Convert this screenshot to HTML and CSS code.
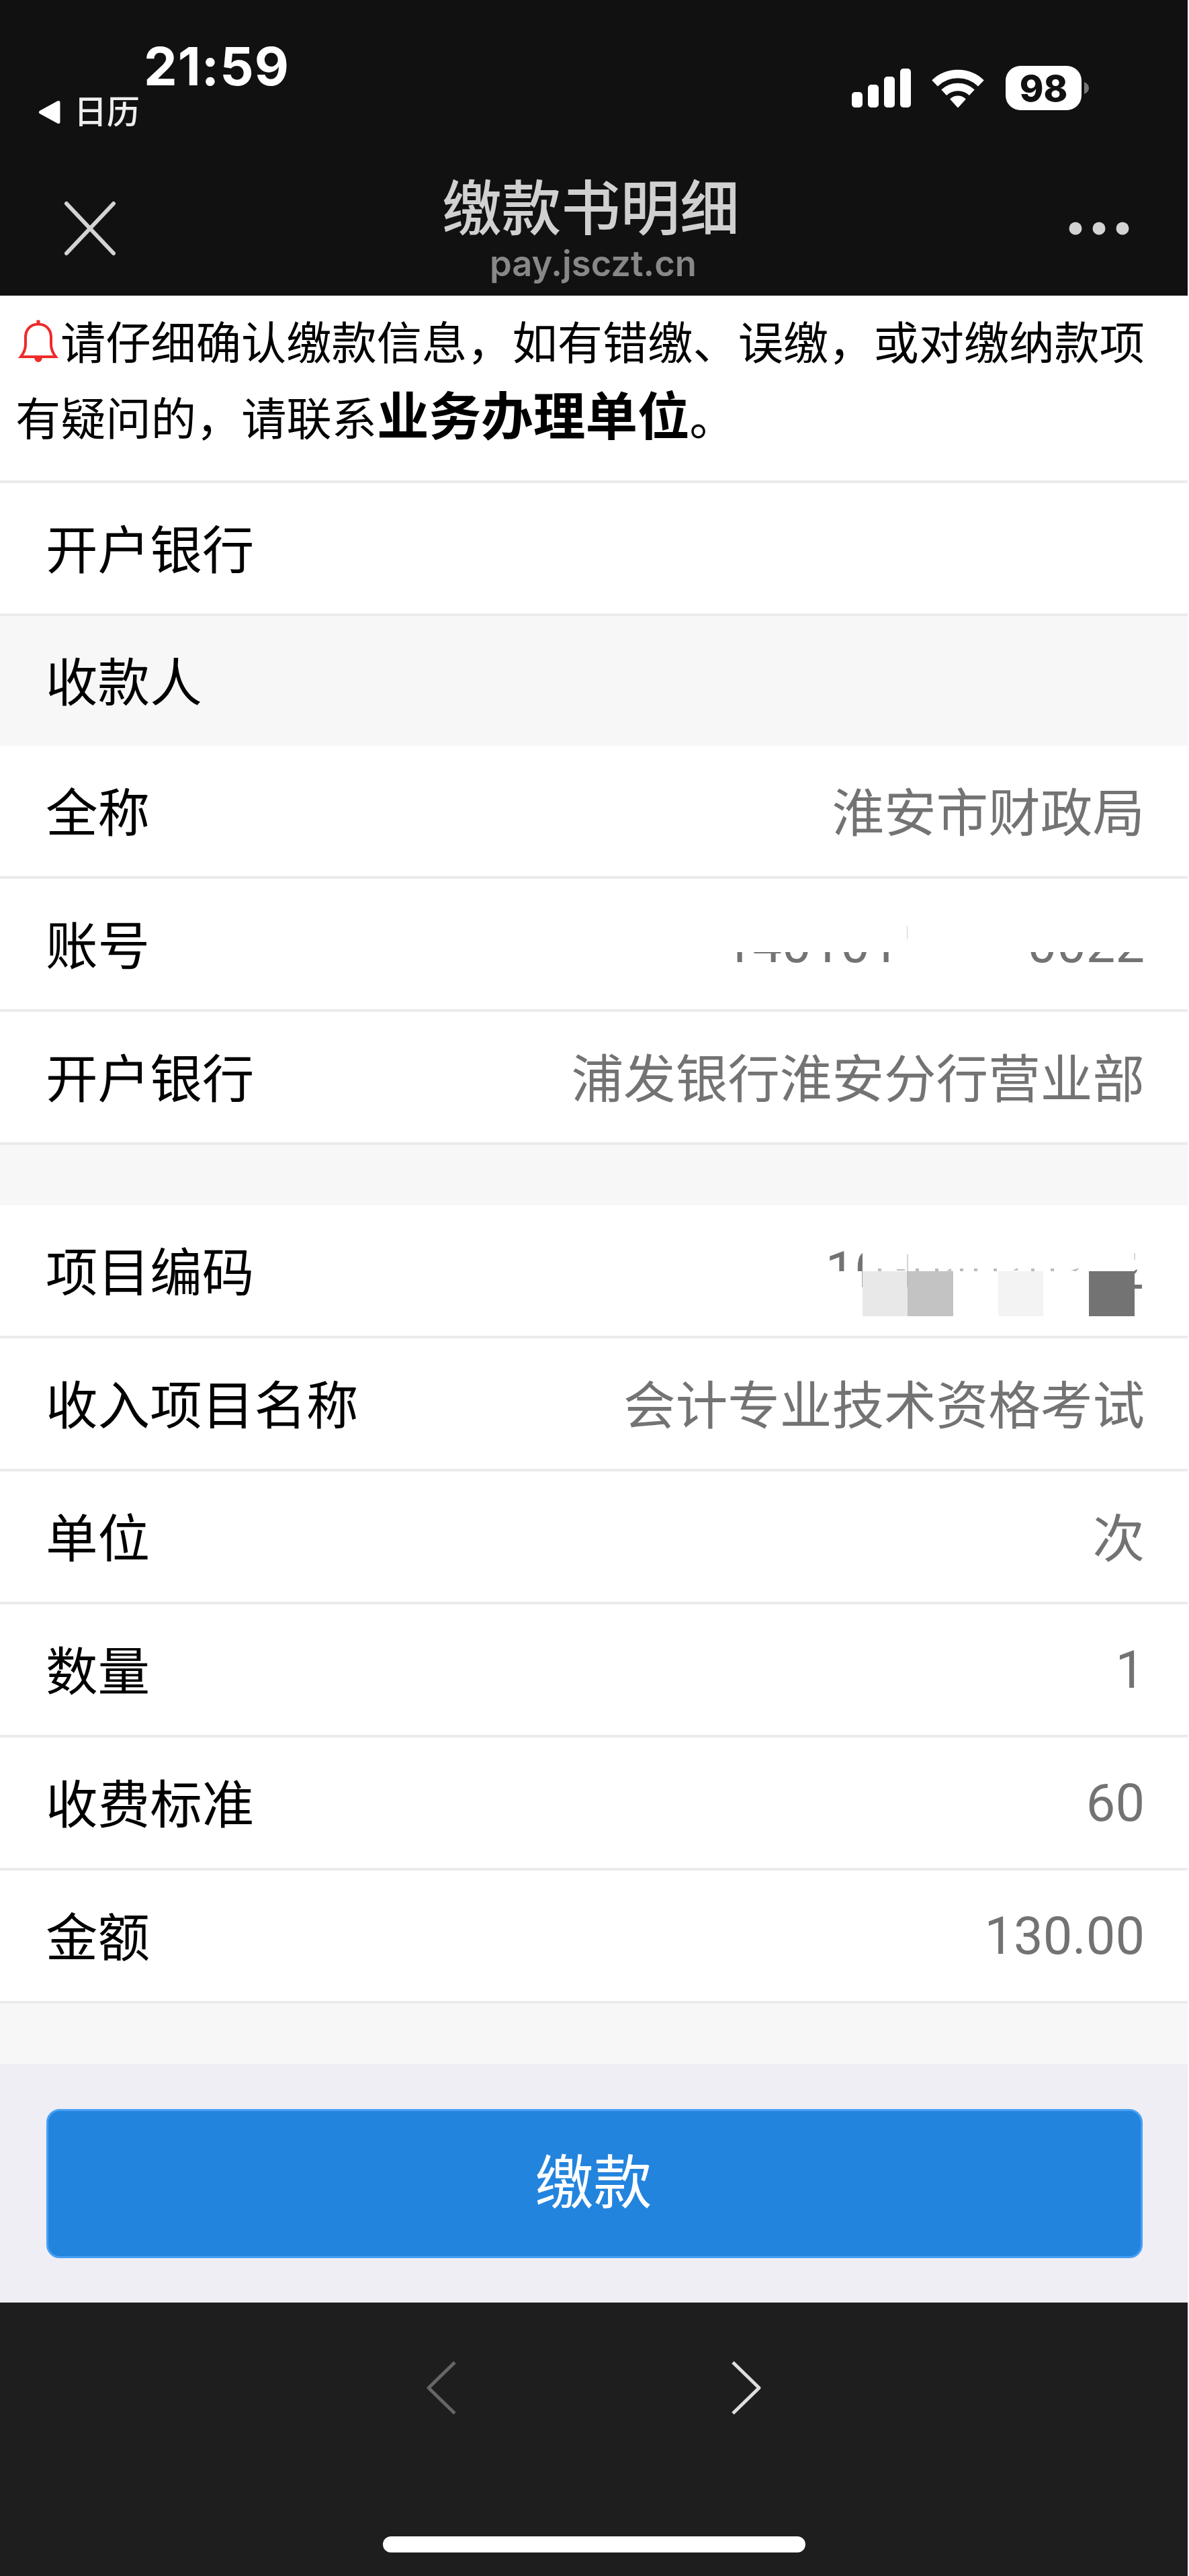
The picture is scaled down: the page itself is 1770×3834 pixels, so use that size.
FILE: index.html
```html
<!DOCTYPE html>
<html lang="zh-CN">
<head>
<meta charset="utf-8">
<title>缴款书明细</title>
<link rel="stylesheet" href="styles.css">
</head>
<body>
<header class="top">
  <div class="status">
    <div class="status-left">
      <div class="time">21:59</div>
      <div class="back">
        <svg width="34" height="36" viewBox="0 0 34 36"><path d="M30 3.5V32.500L3.500 18Z" fill="#fff" stroke="#fff" stroke-width="5" stroke-linejoin="round"/></svg>
        <span>日历</span>
      </div>
    </div>
    <div class="status-right">
      <svg class="signal" width="88" height="58" viewBox="0 0 88 58" fill="#fff"><rect y="35" width="16" height="23" rx="5"/><rect x="24" y="24" width="16" height="34" rx="5"/><rect x="48" y="12" width="16" height="46" rx="5"/><rect x="72" width="16" height="58" rx="5"/></svg>
      <svg class="wifi" width="78" height="59" viewBox="0 0 78 59" fill="none" stroke="#fff"><path d="M4.600 22A49.500 49.500 0 0 1 73.400 22" stroke-width="12.500"/><path d="M18.200 35.700A30.500 30.500 0 0 1 59.800 35.700" stroke-width="11.500"/><path d="M39 57L28.500 45.500A15.500 15.500 0 0 1 49.500 45.500Z" fill="#fff" stroke-width="2" stroke-linejoin="round"/></svg>
      <div class="battery">98</div>
      <svg class="nub" width="7" height="18" viewBox="0 0 7 18"><path d="M0 0Q7 3 7 9T0 18Z" fill="#777"/></svg>
    </div>
  </div>
  <nav class="nav">
    <svg width="80" height="84" viewBox="0 0 80 84"><path d="M5 5L75 79M75 5L5 79" stroke="#d3d3d3" stroke-width="6" stroke-linecap="round"/></svg>
    <div class="heading">
      <h1>缴款书明细</h1>
      <p>pay.jsczt.cn</p>
    </div>
    <svg width="90" height="20" viewBox="0 0 90 20" fill="#d3d3d3"><circle cx="10" cy="10" r="9.500"/><circle cx="45" cy="10" r="9.500"/><circle cx="80" cy="10" r="9.500"/></svg>
  </nav>
</header>

<main>
  <p class="notice"><svg class="bell" width="60" height="64" viewBox="0 0 60 64"><path d="M30 7.500C18 7.500 11 16 11 27V38Q11 47 4 56H56Q49 47 49 38V27C49 16 42 7.500 30 7.500Z" fill="none" stroke="#ee2a2a" stroke-width="4"/><path d="M27.500 1.500H32.500V7H27.500ZM24 57H36Q35 64 30 64T24 57Z" fill="#ee2a2a"/></svg>请仔细确认缴款信息，如有错缴、误缴，或对缴纳款项<br>有疑问的，请联系<strong>业务办理单位</strong>。</p>

  <dl class="list">
    <div class="row"><dt>开户银行</dt></div>
  </dl>
  <h2 class="section">收款人</h2>
  <dl class="list">
    <div class="row"><dt>全称</dt><dd>淮安市财政局</dd></div>
    <div class="row"><dt>账号</dt><dd class="num account"><span>140101</span><i class="sliver"></i><span>0022</span></dd></div>
    <div class="row"><dt>开户银行</dt><dd>浦发银行淮安分行营业部</dd></div>
  </dl>
  <div class="gap"></div>
  <dl class="list">
    <div class="row"><dt>项目编码</dt><dd class="num code"><span>10</span>
      <svg class="mosaic" width="422" height="98" viewBox="0 0 422 98">
        <path fill="#e8e8e8" d="M5 30h67v67H5z"/><path fill="#c3c3c3" d="M72 30h68v67H72z"/><path fill="#f3f3f3" d="M207 30h67v67h-67z"/><path fill="#737373" d="M342 30h68v67h-68z"/>
        <path fill="#737373" d="M410 50h11v6h-11zM410 29l4-2-1 4-3 3z"/>
        <path stroke="#aaa" d="M4.500 28V54M72 5V54M410 3v10" fill="none"/>
        <path fill="#bbb" d="M28 26h5v4h-5zM56 27h12v2H56zM84 26h5v4h-5zM113 26h5v4h-5zM130 29l7-3v4zM150 26h5v4h-5zM171 26h5v4h-5zM200 26h5v4h-5zM229 29l7-4v4zM256 26h5v4h-5zM285 26h5v4h-5zM315 29l13-4-5 5z"/>
      </svg></dd></div>
    <div class="row"><dt>收入项目名称</dt><dd>会计专业技术资格考试</dd></div>
    <div class="row"><dt>单位</dt><dd>次</dd></div>
    <div class="row"><dt>数量</dt><dd class="num">1</dd></div>
    <div class="row"><dt>收费标准</dt><dd class="num">60</dd></div>
    <div class="row"><dt>金额</dt><dd class="num">130.00</dd></div>
  </dl>
  <div class="gap"></div>
  <div class="action"><button class="pay">缴款</button></div>
</main>

<footer class="toolbar">
  <div class="arrows">
    <svg width="46" height="82" viewBox="0 0 46 82"><path d="M43 3L4 41L43 79" fill="none" stroke="#666" stroke-width="5" stroke-linejoin="round"/></svg>
    <svg width="46" height="82" viewBox="0 0 46 82"><path d="M3 3L42 41L3 79" fill="none" stroke="#dedede" stroke-width="5" stroke-linejoin="round"/></svg>
  </div>
  <div class="home"></div>
</footer>
</body>
</html>
```
FILE: styles.css
```css
* { box-sizing: border-box; }
body {
  margin: 0;
  width: 1768px;
  background: #fff;
  color: #000;
  font-family: "Liberation Sans", "Noto Sans CJK SC", sans-serif;
}
h1, h2, p, dl, dt, dd { margin: 0; font-weight: 400; }
svg { display: block; flex: none; }

.top { height: 440px; background: #111; color: #fff; }
.status { height: 240px; display: flex; justify-content: space-between; padding: 48px 147px 0 57px; }
.time {
  margin-left: 157px;
  font: 700 79px/100px Inter, sans-serif;
  letter-spacing: 1px;
}
.back { display: flex; align-items: center; gap: 19px; height: 38px; font-size: 49px; line-height: 38px; color: #eee; }
.back span { font-weight: 500; }
.status-right { display: flex; align-items: center; height: 66px; margin-top: 50px; }
.wifi { margin-left: 31px; }
.battery {
  width: 113px; height: 66px; margin-left: 32px;
  border-radius: 22px;
  background: #fff; color: #111;
  font: 800 54px/67px Inter, sans-serif;
  text-align: center;
}
.nub { margin-left: 4px; }
.nav { height: 200px; display: flex; justify-content: space-between; padding: 20px 87px 0 94px; }
.nav > svg { margin-top: 38px; }
.nav > svg:last-child { margin-top: 70px; }
.heading { text-align: center; margin-left: -6px; }
h1 { font-size: 88.500px; line-height: 104px; font-weight: 500; color: #d0d0d0; }
.heading p { margin-left: 7px; font: 600 52.500px/56px Inter, sans-serif; color: #888; }

.notice {
  height: 279px;
  padding: 15px 0 0 23px;
  border-bottom: 4px solid #ebebeb;
  font-size: 67.250px;
  line-height: 113px;
  white-space: nowrap;
}
.notice strong { font-size: 77.600px; line-height: 1; font-weight: 700; }
.bell { display: inline-block; margin: 0 3px 0 4px; vertical-align: -4px; }

.row {
  display: flex;
  justify-content: space-between;
  height: 198px;
  padding: 7px 64px 0 68px;
  border-bottom: 4px solid #ebebeb;
  background: #fff;
  font-size: 77.600px;
  line-height: 189px;
}
.row dt { flex: none; }
.row dd { color: #737373; }
.row .num { font-family: Roboto, "Liberation Sans", sans-serif; height: 181px; line-height: 181px; }
.section { height: 193px; padding: 7px 68px 0; background: #f7f7f7; font-size: 77.600px; line-height: 186px; }
.gap { height: 90px; background: #f7f7f7; }

.account { display: flex; }
.account span { clip-path: inset(102px 0 0 0); }
.sliver { width: 1px; height: 20px; margin: 63px 179px 0 11px; background: #d0d0d0; }
.code { display: flex; }
.code span { clip-path: inset(0 32px 90px 0); margin-right: -37px; }
.mosaic { margin: 61px 3px 0 0; }

.action { height: 355px; padding: 67px 67px 0 69px; background: #efeef5; }
.pay {
  display: block;
  width: 100%; height: 222px;
  border: 3px solid #47a0f4;
  border-radius: 20px;
  background: #2384de;
  color: #fff;
  font: 400 87px/216px "Liberation Sans", "Noto Sans CJK SC", sans-serif;
  padding: 0 3px 0 0;
}

.toolbar { height: 408px; background: #1e1e1e; padding-top: 86px; }
.arrows { display: flex; justify-content: center; gap: 408px; height: 262px; }
.home { width: 629px; height: 24px; margin: 0 auto; border-radius: 12px; background: #fff; }
```
